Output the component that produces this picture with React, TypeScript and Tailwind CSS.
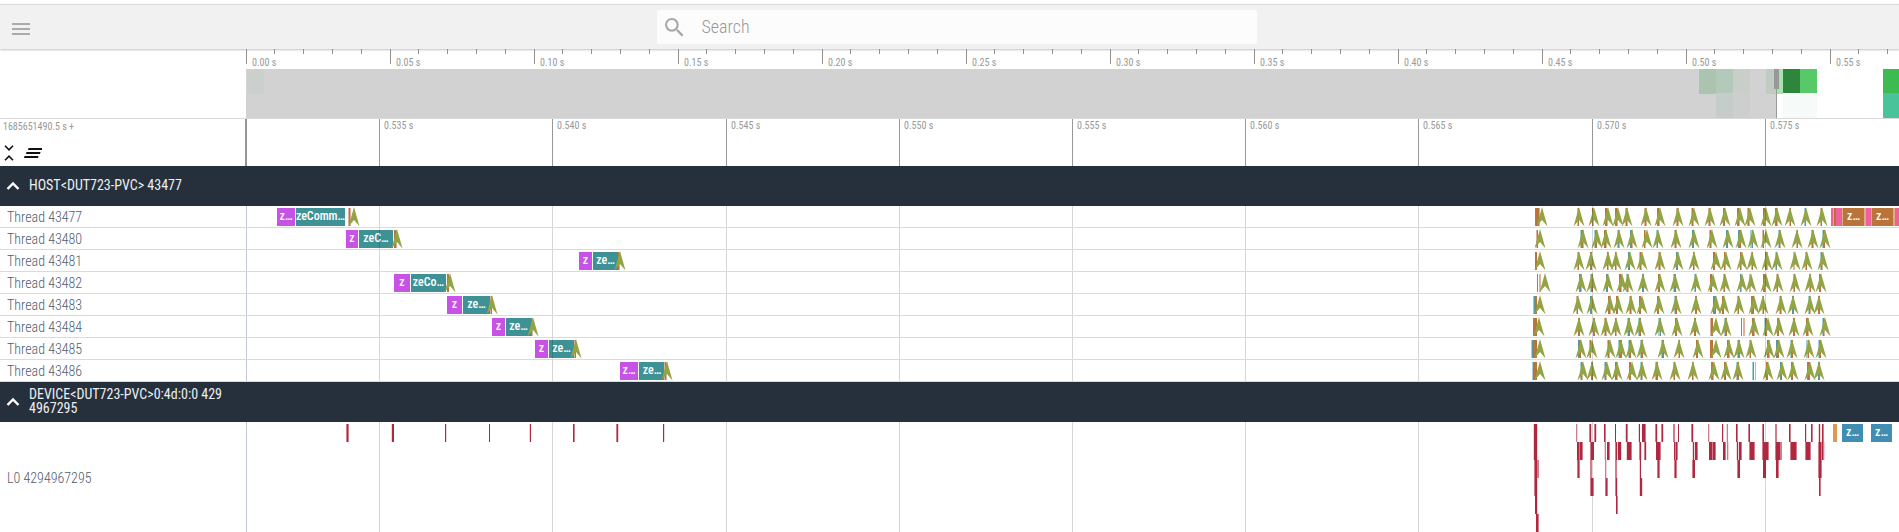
import React from "react";

type Bar = { x: number; w: number; label?: string; kind: keyof typeof BAR };
type Mark = [x: number, stripes: string, arrow?: number];
type Thread = { id: string; bars: Bar[]; marks: Mark[] };

const LABEL_WIDTH = 246;

const BAR = {
  append: "bg-[#c752e6]",
  exec: "bg-[#3e9296]",
  sync: "bg-[#ba7338]",
  wait: "bg-[#f0609a]",
  gap: "bg-[#dcab88]",
  copy: "bg-[#428db4]",
  fence: "bg-[#de9a52]",
};

const STRIPE: Record<string, string> = {
  o: "#ba7338",
  p: "#ddb19a",
  t: "#5c979a",
  l: "#a3cfd6",
  D: "#b02840",
  M: "#d07c8b",
  L: "#f0d5da",
};

const GRID: [number, string][] = [
  [379, "0.535 s"],
  [552, "0.540 s"],
  [726, "0.545 s"],
  [899, "0.550 s"],
  [1072, "0.555 s"],
  [1245, "0.560 s"],
  [1418, "0.565 s"],
  [1592, "0.570 s"],
  [1765, "0.575 s"],
];

const pair = (x: number, w: number, label: string, x2: number, w2: number, label2: string): Bar[] => [
  { x, w, label, kind: "append" },
  { x: x2, w: w2, label: label2, kind: "exec" },
];

const THREADS: Thread[] = [
  {
    id: "Thread 43477",
    bars: [
      ...pair(277, 18, "z…", 296, 49, "zeComm…"),
      { x: 1831, w: 68, kind: "gap" },
      { x: 1831, w: 2, kind: "wait" },
      { x: 1834, w: 2, kind: "sync" },
      { x: 1836, w: 6, kind: "wait" },
      { x: 1843, w: 21, label: "z…", kind: "sync" },
      { x: 1866, w: 5, kind: "wait" },
      { x: 1872, w: 21, label: "z…", kind: "sync" },
      { x: 1895, w: 4, kind: "wait" },
    ],
    marks: [
      [348, "pop", 354], [1535, "tooop", 1542], [1577, "po", 1579], [1592, "op", 1594], [1605, "top", 1608], [1615, "top", 1618],
      [1625, "pop", 1627], [1644, "pop", 1646], [1657, "top", 1660], [1676, "pop", 1678], [1691, "lop", 1694], [1708, "pop", 1710],
      [1723, "to", 1725], [1737, "top", 1740], [1747, "pop", 1750], [1763, "oop", 1766], [1775, "top", 1777], [1789, "po", 1790],
      [1804, "lt", 1806], [1820, "po", 1822],
    ],
  },
  {
    id: "Thread 43480",
    bars: pair(346, 12, "z", 359, 34, "zeC…"),
    marks: [
      [394, "oop", 397], [1536, "po", 1540], [1580, "ltop", 1583], [1594, "lto", 1597], [1604, "oop", 1606], [1617, "ltp", 1619],
      [1630, "top", 1632], [1644, "op", 1647], [1656, "lt", 1658], [1674, "pop", 1676], [1692, "to", 1694], [1709, "pop", 1712],
      [1726, "to", 1728], [1738, "tto", 1741], [1750, "lpt", 1753], [1762, "po", 1766], [1778, "lop", 1780], [1796, "po", 1797],
      [1811, "pop", 1813], [1822, "lto", 1825],
    ],
  },
  {
    id: "Thread 43481",
    bars: pair(579, 13, "z", 593, 25, "ze…"),
    marks: [
      [618, "op", 620], [1535, "oo", 1540], [1577, "po", 1579], [1590, "oo", 1591], [1607, "op", 1608], [1615, "op", 1616],
      [1628, "to", 1630], [1639, "lop", 1642], [1658, "pop", 1660], [1676, "tt", 1678], [1693, "op", 1694], [1713, "oo", 1716],
      [1724, "op", 1726], [1740, "op", 1742], [1751, "po", 1752], [1765, "oop", 1767], [1775, "lt", 1777], [1793, "lp", 1795],
      [1805, "po", 1807], [1820, "ltp", 1823],
    ],
  },
  {
    id: "Thread 43482",
    bars: pair(394, 16, "z", 411, 35, "zeCo…"),
    marks: [
      [447, "oo", 450], [1537, "t.pp", 1545], [1579, "ttp", 1581], [1590, "lto", 1592], [1606, "to", 1608], [1619, "oop", 1622],
      [1626, "ltp", 1628], [1642, "to", 1643], [1658, "oo", 1660], [1673, "lto", 1675], [1694, "lt", 1696], [1710, "oo", 1713],
      [1723, "po", 1725], [1740, "tp", 1742], [1749, "pp", 1751], [1763, "oop", 1766], [1776, "po", 1778], [1793, "po", 1795],
      [1809, "po", 1810], [1819, "to", 1821],
    ],
  },
  {
    id: "Thread 43483",
    bars: pair(447, 15, "z", 463, 27, "ze…"),
    marks: [
      [490, "po", 492], [1533, "ptoo", 1540], [1576, "po", 1578], [1590, "to", 1592], [1608, "oop", 1610], [1616, "oo", 1618],
      [1629, "lop", 1631], [1639, "oo", 1642], [1657, "to", 1659], [1674, "lto", 1676], [1695, "to", 1696], [1713, "tto", 1716],
      [1722, "oo", 1724], [1737, "po", 1739], [1751, "too", 1754], [1762, "po", 1763], [1779, "lop", 1781], [1792, "tt", 1793],
      [1808, "lop", 1810], [1818, "oo", 1819],
    ],
  },
  {
    id: "Thread 43484",
    bars: pair(492, 13, "z", 506, 25, "ze…"),
    marks: [
      [531, "op", 533], [1533, "tooo", 1539], [1578, "oo", 1579], [1593, "to", 1594], [1604, "pop", 1606], [1615, "op", 1616],
      [1627, "lto", 1629], [1638, "lto", 1640], [1658, "llt", 1660], [1675, "to", 1677], [1694, "oo", 1695], [1710, "poo", 1716],
      [1724, "lto", 1726], [1741, "t.pp"], [1752, "oop", 1754], [1764, "lto", 1768], [1777, "to", 1779], [1793, "to", 1794],
      [1806, "oop", 1808], [1822, "ltp", 1825],
    ],
  },
  {
    id: "Thread 43485",
    bars: pair(535, 13, "z", 549, 25, "ze…"),
    marks: [
      [574, "po", 576], [1531, "ltoooo", 1540], [1578, "too", 1581], [1589, "po", 1592], [1607, "pop", 1610], [1618, "ltoo", 1621],
      [1628, "lto", 1631], [1640, "lto", 1642], [1661, "lto", 1663], [1678, "po", 1679], [1696, "oo", 1698], [1710, "oto", 1716],
      [1727, "oop", 1729], [1737, "lto", 1739], [1749, "lo", 1751], [1767, "oop", 1769], [1776, "too", 1779], [1790, "lto", 1792],
      [1806, "lpo", 1809], [1818, "lto", 1821],
    ],
  },
  {
    id: "Thread 43486",
    bars: pair(620, 18, "z…", 639, 26, "ze…"),
    marks: [
      [664, "pop", 667], [1532, "loooo", 1540], [1580, "lop", 1583], [1591, "oo", 1592], [1604, "lop", 1607], [1615, "oop", 1617],
      [1629, "to", 1632], [1640, "lop", 1642], [1655, "poo", 1657], [1673, "po", 1675], [1692, "op", 1693], [1711, "top", 1714],
      [1724, "oo", 1726], [1736, "lto", 1738], [1752, "lt.p"], [1766, "oo", 1768], [1780, "to", 1782], [1791, "oo", 1793],
      [1807, "too", 1810], [1818, "to", 1819],
    ],
  },
];

/* Each entry is a nesting depth holding [x, per-pixel shades]. */
const DEVICE: Mark[][] = [
  [
    [346, "MDM"], [391, "LDD"], [445, "DL"], [489, "D"], [529, "LD"], [573, "DM"], [616, "MDL"], [663, "DL"],
    [1533, "LDDDL"], [1576, "ML"], [1589, "MDL"], [1594, "MDL"], [1604, "DM"], [1615, "D"], [1625, "LDM"], [1638, "LD"],
    [1642, "DDDM"], [1655, "MDL"], [1661, "MDL"], [1673, "MM"], [1678, "D"], [1691, "MDL"], [1708, "ML"], [1722, "DL"],
    [1726, "LM"], [1736, "DM"], [1748, "MD"], [1762, "MD"], [1775, "MM"], [1789, "DM"], [1805, "DL"], [1811, "DM"],
    [1818, "LDL"], [1822, "DM"],
  ],
  [
    [1533, "LDDDL"], [1577, "DDMDDM"], [1590, "MDDD"], [1604, "LM"], [1607, "DDM"], [1615, "MDL"], [1618, "DDDL"],
    [1626, "LDDDDM"], [1639, "MDL"], [1644, "MDL"], [1656, "DDDDM"], [1674, "DMDM"], [1692, "LDLDDM"], [1709, "DDDMDDM"],
    [1723, "DDM"], [1727, "ML"], [1736, "LDLDDM"], [1749, "MDDDDM"], [1762, "MDDDDDM"], [1775, "MDDDDMM"], [1790, "MDDDDDM"],
    [1805, "MDDDDM"], [1818, "MDDMDML"],
  ],
  [
    [1534, "MDDMM"], [1577, "MDM"], [1590, "MM"], [1605, "ML"], [1615, "MM"], [1639, "LD"], [1657, "MDM"], [1674, "MDM"],
    [1692, "MDD"], [1737, "MDD"], [1763, "DDD"], [1776, "DDM"], [1818, "MDDM"],
  ],
  [[1534, "MDDL"], [1590, "MDDM"], [1605, "MDM"], [1615, "MDL"], [1639, "LDDL"], [1819, "DM"]],
  [[1535, "DDL"], [1616, "DM"]],
  [[1536, "DDM"]],
];

const TICKS = Array.from({ length: 60 }, (_, i) => i);

function Stripes({ marks, y }: { marks: Mark[]; y: number }) {
  return (
    <>
      {marks.map(([x, stripes]) =>
        stripes.split("").map((s, i) =>
          STRIPE[s] ? <rect key={`${x}-${i}`} x={x + i} y={y} width="1" height="18" fill={STRIPE[s]} /> : null,
        ),
      )}
    </>
  );
}

function Bars({ bars }: { bars: Bar[] }) {
  return (
    <>
      {bars.map((b) => (
        <div
          key={`${b.x}-${b.kind}`}
          className={`absolute top-0.5 flex h-[18px] justify-center overflow-hidden text-xs leading-4 font-medium whitespace-nowrap text-white ${BAR[b.kind]}`}
          style={{ left: b.x - LABEL_WIDTH, width: b.w }}
        >
          {b.label}
        </div>
      ))}
    </>
  );
}

function GridLines() {
  return (
    <>
      <div className="absolute inset-y-0 left-0 w-px bg-[#c3c9d3]" />
      {GRID.map(([x]) => (
        <div key={x} className="absolute inset-y-0 w-px bg-black/16" style={{ left: x - LABEL_WIDTH }} />
      ))}
    </>
  );
}

function GroupHeader({ title }: { title: string }) {
  return (
    <button className="flex h-10 w-full items-center bg-[#262f3c] text-left text-sm leading-[14px] text-[#eceff1]">
      <svg className="ml-1.5 size-3.5 shrink-0" viewBox="0 0 14 14" fill="none" stroke="white" strokeWidth="2.4">
        <path d="M1.500 10L7 4.500l5.500 5.500" />
      </svg>
      <span className="ml-[9px] w-[195px] pb-0.5 break-all">{title}</span>
    </button>
  );
}

function Overview() {
  return (
    <section className="flex h-[70px] border-b border-[#dadada]">
      <div className="w-[246px] shrink-0" />
      <div className="relative min-w-0 flex-1 overflow-hidden">
        {TICKS.map((i) => {
          const major = i % 5 === 0;
          return (
            <div
              key={i}
              className={`absolute top-0 w-px bg-[#909090] ${major ? "h-[15px]" : "h-[5px]"}`}
              style={{ left: Math.floor(i * 28.8) }}
            >
              {major && (
                <span className="absolute top-2 left-1.5 text-[10px] leading-3 whitespace-nowrap text-[#999]">
                  {(i / 100).toFixed(2)} s
                </span>
              )}
            </div>
          );
        })}
        <svg className="absolute top-5 left-0 h-[49px] w-full" shapeRendering="crispEdges">
          <g transform={`translate(${-LABEL_WIDTH})`}>
            <rect x="246" width="1530" height="49" fill="#d2d2d2" />
            <rect x="247" width="17" height="25" fill="#cbd0cc" />
            <rect x="1699" width="17" height="25" fill="#abc4b0" />
            <rect x="1716" width="17" height="24" fill="#b3c9b9" />
            <rect x="1733" width="17" height="24" fill="#cacec8" />
            <rect x="1716" y="24" width="17" height="25" fill="#c5cdca" />
            <rect x="1733" y="24" width="17" height="25" fill="#cdcfce" />
            <rect x="1766" width="10" height="25" fill="#c0ccc1" />
            <rect x="1776" width="7" height="25" fill="#a8e2af" />
            <rect x="1783" width="17" height="24" fill="#2d863c" />
            <rect x="1800" width="17" height="24" fill="#57c968" />
            <rect x="1783" y="24" width="34" height="25" fill="#f6fbfa" />
            <rect x="1883" width="16" height="24" fill="#3dbb50" />
            <rect x="1883" y="24" width="16" height="25" fill="#48c39a" />
            <rect x="1776" width="1" height="49" fill="#999" />
            <rect x="1774" width="5" height="20" fill="#999" />
          </g>
        </svg>
      </div>
    </section>
  );
}

function TimeAxis() {
  return (
    <section className="flex h-[47px] text-[10px] leading-3 text-[#999]">
      <div className="-mr-px flex w-[247px] shrink-0 flex-col border-r-2 border-[#949494] pt-0.5">
        <span className="pl-[3px]">1685651490.5 s +</span>
        <div className="flex items-center gap-3 pt-3 pl-1">
          <button aria-label="Collapse all">
            <svg className="h-4 w-2.5" viewBox="0 0 10 16" fill="none" stroke="#111" strokeWidth="1.6">
              <path d="M1 .8l4 4 4-4M1 15.2l4-4 4 4" />
            </svg>
          </button>
          <button aria-label="Clear all pinned tracks" className="-ml-0.5">
            <svg className="h-3 w-[18px]" viewBox="0 0 18 12" fill="#111">
              <path d="M4.500 1h14l-.5 2h-14zM2.500 5h14l-.5 2h-14zM.5 9h14l-.5 2h-14z" />
            </svg>
          </button>
        </div>
      </div>
      <div className="relative min-w-0 flex-1 overflow-hidden">
        {GRID.map(([x, label]) => (
          <div key={x} className="absolute inset-y-0 border-l border-[#999] pt-px pl-1" style={{ left: x - LABEL_WIDTH }}>
            {label}
          </div>
        ))}
      </div>
    </section>
  );
}

export default function App() {
  return (
    <div className="flex h-screen flex-col overflow-hidden bg-white pt-1 font-['Roboto_Condensed',Roboto,sans-serif]">
      <header className="relative flex h-[45px] shrink-0 items-center border-t border-[#dadada] bg-[#f1f1f1] shadow-[0_1px_2px_rgba(0,0,0,0.25)]">
        <button aria-label="Menu" className="mt-1 ml-3 flex w-[18px] flex-col gap-[3px]">
          <span className="h-0.5 w-full bg-[#aaa]" />
          <span className="h-0.5 w-full bg-[#aaa]" />
          <span className="h-0.5 w-full bg-[#aaa]" />
        </button>
        <div className="flex flex-1 justify-center pr-4">
          <label className="flex h-[34px] w-[600px] items-center rounded-xs bg-[#fcfcfc] pl-2">
            <svg className="size-[19px] shrink-0" viewBox="3 3 18 18" fill="#a6a6a6">
              <path d="M15.500 14h-.79l-.28-.27A6.471 6.471 0 0 0 16 9.500 6.500 6.500 0 1 0 9.500 16c1.610 0 3.090-.59 4.230-1.570l.27.28v.79l5 4.990L20.490 19l-4.990-5zm-6 0C7.010 14 5 11.990 5 9.500S7.010 5 9.500 5 14 7.010 14 9.500 11.990 14 9.500 14z" />
            </svg>
            <input
              aria-label="Search"
              placeholder="Search"
              className="ml-[18px] min-w-0 flex-1 bg-transparent text-lg font-light outline-none placeholder:text-[#999]"
            />
          </label>
        </div>
      </header>

      <div className="relative shrink-0">
        <Overview />
        <TimeAxis />
        <GroupHeader title="HOST<DUT723-PVC> 43477" />
        {THREADS.map((t) => (
          <div key={t.id} className="flex h-[22px]">
            <div className="w-[246px] shrink-0 border-b border-[#dadada] pl-[7px] text-sm leading-[22px] font-light text-[#4f5d6e]">
              {t.id}
            </div>
            <div className="relative min-w-0 flex-1 overflow-hidden border-b border-[#dadada]">
              <Bars bars={t.bars} />
              <svg className="absolute inset-0 size-full">
                <g transform={`translate(${-LABEL_WIDTH})`}>
                  <Stripes marks={t.marks} y={2} />
                  {t.marks.map(([, , x]) =>
                    x ? <path key={x} d={`M${x} 1l5.500 19.500-5.500-6.500-5.500 6.500z`} fill="#93a445" /> : null,
                  )}
                </g>
              </svg>
              <GridLines />
            </div>
          </div>
        ))}
        <GroupHeader title="DEVICE<DUT723-PVC>0:4d:0:0 4294967295" />
        <div className="flex h-28">
          <div className="flex w-[246px] shrink-0 items-center pl-[7px] text-sm font-light text-[#4f5d6e]">L0 4294967295</div>
          <div className="relative min-w-0 flex-1 overflow-hidden">
            <GridLines />
            <svg className="absolute inset-0 size-full">
              <g transform={`translate(${-LABEL_WIDTH})`}>
                {DEVICE.map((marks, depth) => (
                  <Stripes key={depth} marks={marks} y={2 + depth * 18} />
                ))}
              </g>
            </svg>
            <Bars
              bars={[
                { x: 1833, w: 4, kind: "fence" },
                { x: 1842, w: 21, label: "z…", kind: "copy" },
                { x: 1871, w: 21, label: "z…", kind: "copy" },
              ]}
            />
          </div>
        </div>
      </div>
    </div>
  );
}
